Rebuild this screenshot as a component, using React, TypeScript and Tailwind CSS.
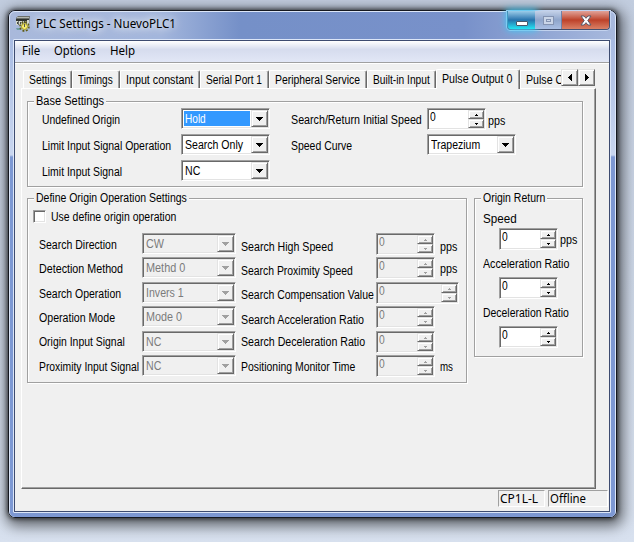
import React, { useLayoutEffect, useRef, useState } from "react";
import clsx from "clsx";

interface TextProps {
  w: number;
  children: string;
  className?: string;
}

// Text condensed or widened to the width of the old dialog font
const Text: React.FC<TextProps> = ({ w, children, className }) => {
  const ref = useRef<HTMLSpanElement>(null);
  const [scale, setScale] = useState(1);

  useLayoutEffect(() => {
    if (ref.current) setScale(w / ref.current.offsetWidth);
  }, [w, children]);

  return (
    <div
      className={clsx("h-[14px] shrink-0 leading-[14px] whitespace-nowrap", className)}
      style={{ width: w }}
    >
      <span
        ref={ref}
        className="inline-block origin-left"
        style={{ transform: `scaleX(${scale})` }}
      >
        {children}
      </span>
    </div>
  );
};

const SUNKEN =
  "border border-t-[#a0a0a0] border-l-[#a0a0a0] border-r-white border-b-white shadow-[inset_1px_1px_0_#696969,inset_-1px_-1px_0_#e3e3e3]";
const RAISED =
  "border border-t-[#e3e3e3] border-l-[#e3e3e3] border-r-[#696969] border-b-[#696969] bg-[#f0f0f0] shadow-[inset_1px_1px_0_#fff,inset_-1px_-1px_0_#a0a0a0]";

interface ComboProps {
  value: string;
  textWidth: number;
  width?: string;
  disabled?: boolean;
  selected?: boolean;
}

const Combo: React.FC<ComboProps> = ({
  value,
  textWidth,
  width = "w-[89px]",
  disabled,
  selected,
}) => (
  <div
    className={clsx(
      "flex h-[21px] shrink-0 p-px",
      SUNKEN,
      width,
      disabled ? "bg-[#f0f0f0] text-[#7b7b7b]" : "bg-white"
    )}
  >
    <div
      className={clsx(
        "m-px min-w-0 flex-1 pl-px pt-px",
        selected && "bg-[#3399ff] text-white"
      )}
    >
      <Text w={textWidth}>{value}</Text>
    </div>
    <div className={clsx("flex w-[17px] items-center justify-center", RAISED)}>
      <svg width="7" height="4" shapeRendering="crispEdges" fill={disabled ? "#a0a0a0" : "#000"}>
        <path d="M0 0h7v1H0zM1 1h5v1H1zM2 2h3v1H2zM3 3h1v1H3z" />
      </svg>
    </div>
  </div>
);

interface SpinProps {
  width?: string;
  disabled?: boolean;
}

const Spin: React.FC<SpinProps> = ({ width = "w-[59px]", disabled }) => {
  const fill = disabled ? "#a0a0a0" : "#000";
  return (
    <div
      className={clsx(
        "flex h-[22px] shrink-0 p-px",
        SUNKEN,
        width,
        disabled ? "bg-[#f0f0f0] text-[#7b7b7b]" : "bg-white"
      )}
    >
      <div className="flex-1 pl-px">
        <Text w={6}>0</Text>
      </div>
      <div className="flex w-[16px] flex-col">
        <div className={clsx("flex h-[9px] items-center justify-center", RAISED)}>
          <svg width="3" height="2" shapeRendering="crispEdges" fill={fill}>
            <path d="M1 0h1v1H1zM0 1h3v1H0z" />
          </svg>
        </div>
        <div className={clsx("flex h-[9px] items-center justify-center", RAISED)}>
          <svg width="3" height="2" shapeRendering="crispEdges" fill={fill}>
            <path d="M0 0h3v1H0zM1 1h1v1H1z" />
          </svg>
        </div>
      </div>
    </div>
  );
};

interface GroupProps {
  title: string;
  titleWidth: number;
  className: string;
  children: React.ReactNode;
}

const Group: React.FC<GroupProps> = ({ title, titleWidth, className, children }) => (
  <fieldset
    className={clsx(
      "shrink-0 border border-[#a0a0a0] shadow-[1px_1px_0_#fff,inset_1px_1px_0_#fff]",
      className
    )}
  >
    <legend className="ml-[6px] h-[14px] bg-[#f0f0f0] px-[2px]">
      <Text w={titleWidth}>{title}</Text>
    </legend>
    {children}
  </fieldset>
);

const TABS = [
  { label: "Settings", w: 37, box: "w-[49px]" },
  { label: "Timings", w: 35, box: "w-[48px]" },
  { label: "Input constant", w: 67, box: "w-[80px]" },
  { label: "Serial Port 1", w: 56, box: "w-[69px]" },
  { label: "Peripheral Service", w: 85, box: "w-[98px]" },
  { label: "Built-in Input", w: 57, box: "w-[69px]" },
  { label: "Pulse Output 0", w: 70, box: "w-[84px]", active: true },
  { label: "Pulse Output 1", w: 70, box: "w-[41px]", cut: true },
];

const ORIGIN_ROWS = [
  { label: "Search Direction", w: 78, value: "CW", vw: 18, pad: "pt-[5px]", box: "h-[24px]" },
  { label: "Detection Method", w: 84, value: "Methd 0", vw: 39, pad: "pt-[5px]", box: "h-[25px]" },
  { label: "Search Operation", w: 82, value: "Invers 1", vw: 38, pad: "pt-[5px]", box: "h-[24px]" },
  { label: "Operation Mode", w: 76, value: "Mode 0", vw: 36, pad: "pt-[5px]", box: "h-[25px]" },
  { label: "Origin Input Signal", w: 86, value: "NC", vw: 15, pad: "pt-[4px]", box: "h-[24px]" },
  { label: "Proximity Input Signal", w: 100, value: "NC", vw: 15, pad: "pt-[5px]", box: "h-[24px]" },
];

const SEARCH_ROWS = [
  { label: "Search High Speed", w: 92, pad: "pt-[7px]", box: "h-[24px]", unit: "pps", uw: 17, upad: "pt-[7px]" },
  { label: "Search Proximity Speed", w: 112, pad: "pt-[7px]", box: "h-[25px]", unit: "pps", uw: 17, upad: "pt-[5px]" },
  { label: "Search Compensation Value", w: 133, pad: "pt-[6px]", box: "h-[24px]", wide: true },
  { label: "Search Acceleration Ratio", w: 123, pad: "pt-[7px]", box: "h-[25px]" },
  { label: "Search Deceleration Ratio", w: 124, pad: "pt-[4px]", box: "h-[24px]" },
  { label: "Positioning Monitor Time", w: 114, pad: "pt-[5px]", box: "h-[24px]", unit: "ms", uw: 13, upad: "pt-[5px]" },
];

const AppIcon = () => (
  <svg width="16" height="16" viewBox="0 0 16 16">
    <path d="M1 2l2-2h12l-1 9H1z" fill="#6b6f6b" />
    <path d="M1 3h13v2H1z" fill="#2e322e" />
    <path d="M2 1h12v1H2z" fill="#b4b8b0" />
    <path d="M1 5h2v4H1zM4 5h3v4H4zM8 5h3v3H8zM12 4h2v5h-2z" fill="#d4d8cc" />
    <path d="M2 6h1v2H2zM5 6h1v2H5zM9 5h1v2H9z" fill="#454a45" />
    <path d="M1 12h4v2H2z" fill="#6d9da0" />
    <circle cx="9.500" cy="10.500" r="4.500" fill="none" stroke="#5e5a10" strokeWidth="1.500" strokeDasharray="2 1.500" />
    <circle cx="9.500" cy="10.500" r="3" fill="#f4ec70" stroke="#a39a1c" />
    <path d="M9 8h1v3H9z" fill="#555" />
  </svg>
);

const TitleBar = () => (
  <div className="flex h-[27px] justify-between">
    <div className="flex pl-[5px] pt-[4px]">
      <AppIcon />
      <Text w={140} className="ml-[5px] mt-px font-['Noto_Sans','Open_Sans',sans-serif] text-[12px] [text-shadow:0_0_8px_#fff,0_0_12px_#fff]">
        PLC Settings - NuevoPLC1
      </Text>
    </div>
    <div className="-mt-px mr-[5px] flex h-[19px] w-[103px] rounded-b-[4px] border border-t-0 border-[#42506f] shadow-[0_0_0_1px_#c3d2ee]">
      <div className="flex w-[27px] justify-center rounded-bl-[3px] bg-linear-to-b from-[#9acde9] from-0% via-[#2674ad] via-50% to-[#22e5f3] shadow-[0_0_7px_2px_#43c7f5]">
        <div className="mt-[10px] h-[5px] w-[12px] rounded-[1px] border border-[#48586a] bg-white" />
      </div>
      <div className="flex w-[27px] justify-center border-r border-[#7182a8] bg-linear-to-b from-[#c4d1e8] via-[#8fa5cb] to-[#aabfe4]">
        <div className="mt-[5px] flex h-[9px] w-[11px] items-center justify-center border border-[#8493b2] bg-[#cad5e8]">
          <div className="h-[3px] w-[5px] border border-[#8493b2]" />
        </div>
      </div>
      <div className="flex flex-1 justify-center rounded-br-[3px] bg-linear-to-b from-[#e0a299] from-0% via-[#bd4129] via-50% to-[#d98066]">
        <svg className="mt-[4px]" width="12" height="11" viewBox="0 0 12 11">
          <path d="M1 1h3l2 2.300L8 1h3L7.800 5.500 11 10H8L6 7.700 4 10H1l3.200-4.500z" fill="#fff" stroke="#595a6a" />
        </svg>
      </div>
    </div>
  </div>
);

const MenuBar = () => (
  <div className="flex h-[22px] shrink-0 border-b border-[#a0a0a0] bg-linear-to-b from-white from-0% via-[#d6dcee] via-40% to-[#e2e7f6] pl-[7px] pt-[3px] font-['Noto_Sans','Open_Sans',sans-serif]">
    <Text w={18}>File</Text>
    <Text w={42} className="ml-[14px]">Options</Text>
    <Text w={25} className="ml-[14px]">Help</Text>
  </div>
);

const TabStrip = () => (
  <div className="flex h-[19px] items-end pl-[2px]">
    {TABS.map((tab) => (
      <div
        key={tab.label}
        className={clsx(
          "shrink-0 overflow-hidden border-t border-l border-white pl-[5px]",
          tab.box,
          tab.active ? "h-[20px] -mb-px bg-[#f0f0f0] pt-[2px]" : "h-[18px] pt-[2px]",
          !tab.cut && "rounded-t-[2px] border-r border-r-[#696969] shadow-[inset_-1px_0_0_#a0a0a0]"
        )}
      >
        <Text w={tab.w}>{tab.label}</Text>
      </div>
    ))}
    <div className="mb-[2px] flex">
      <div className={clsx("flex h-[17px] w-[17px] items-center justify-center", RAISED)}>
        <svg width="4" height="7" shapeRendering="crispEdges">
          <path d="M3 0h1v7H3zM2 1h1v5H2zM1 2h1v3H1zM0 3h1v1H0z" />
        </svg>
      </div>
      <div className={clsx("flex h-[17px] w-[17px] items-center justify-center", RAISED)}>
        <svg width="4" height="7" shapeRendering="crispEdges">
          <path d="M0 0h1v7H0zM1 1h1v5H1zM2 2h1v3H2zM3 3h1v1H3z" />
        </svg>
      </div>
    </div>
  </div>
);

const BaseSettings = () => (
  <Group title="Base Settings" titleWidth={68} className="-mt-px h-[93px] w-[556px]">
    <div className="flex pl-[14px]">
      <div className="flex w-[139px] flex-col gap-[12px] pt-[5px]">
        <Text w={78}>Undefined Origin</Text>
        <Text w={129}>Limit Input Signal Operation</Text>
        <Text w={80}>Limit Input Signal</Text>
      </div>
      <div className="flex w-[110px] flex-col gap-[5px]">
        <Combo value="Hold" textWidth={21} selected />
        <Combo value="Search Only" textWidth={58} />
        <Combo value="NC" textWidth={15} />
      </div>
      <div className="flex w-[136px] flex-col gap-[12px] pt-[5px]">
        <Text w={131}>Search/Return Initial Speed</Text>
        <Text w={61}>Speed Curve</Text>
      </div>
      <div className="flex flex-col gap-[4px]">
        <div className="flex">
          <Spin />
          <Text w={17} className="ml-[2px] mt-[6px]">pps</Text>
        </div>
        <Combo value="Trapezium" textWidth={49} />
      </div>
    </div>
  </Group>
);

const DefineOrigin = () => (
  <Group title="Define Origin Operation Settings" titleWidth={151} className="h-[192px] w-[440px]">
    <div className="flex h-[28px] pl-[5px] pt-[5px]">
      <div className={clsx("h-[13px] w-[13px] bg-white", SUNKEN)} />
      <Text w={125} className="ml-[5px]">Use define origin operation</Text>
    </div>
    <div className="flex pl-[11px]">
      <div className="w-[202px]">
        {ORIGIN_ROWS.map((row) => (
          <div key={row.label} className={clsx("flex", row.box)}>
            <div className={clsx("w-[103px] shrink-0", row.pad)}>
              <Text w={row.w}>{row.label}</Text>
            </div>
            <Combo value={row.value} textWidth={row.vw} width="w-[94px]" disabled />
          </div>
        ))}
      </div>
      <div>
        {SEARCH_ROWS.map((row) => (
          <div key={row.label} className={clsx("flex", row.box)}>
            <div className={clsx("w-[135px] shrink-0", row.pad)}>
              <Text w={row.w}>{row.label}</Text>
            </div>
            <Spin width={row.wide ? "w-[83px]" : "w-[59px]"} disabled />
            {row.unit && (
              <div className={clsx("ml-[5px]", row.upad)}>
                <Text w={row.uw}>{row.unit}</Text>
              </div>
            )}
          </div>
        ))}
      </div>
    </div>
  </Group>
);

const OriginReturn = () => (
  <Group title="Origin Return" titleWidth={62} className="h-[166px] w-[109px]">
    <div className="pl-[8px] pt-[7px]">
      <Text w={34}>Speed</Text>
      <div className="ml-[16px] mt-[2px] flex">
        <Spin />
        <Text w={17} className="ml-[2px] mt-[5px]">pps</Text>
      </div>
      <Text w={86} className="mt-[7px]">Acceleration Ratio</Text>
      <div className="ml-[16px] mt-[6px]">
        <Spin />
      </div>
      <Text w={86} className="mt-[7px]">Deceleration Ratio</Text>
      <div className="ml-[16px] mt-[6px]">
        <Spin />
      </div>
    </div>
  </Group>
);

const StatusBar = () => (
  <div className="flex h-[17px] justify-end gap-[3px] pr-px font-['Noto_Sans','Open_Sans',sans-serif]">
    <div className="w-[47px] border border-t-[#a0a0a0] border-l-[#a0a0a0] border-r-white border-b-white pl-px pt-px">
      <Text w={38}>CP1L-L</Text>
    </div>
    <div className="w-[60px] border border-t-[#a0a0a0] border-l-[#a0a0a0] border-r-white border-b-white pl-px pt-px">
      <Text w={36}>Offline</Text>
    </div>
  </div>
);

export default function App() {
  return (
    <div className="h-[542px] w-[634px] overflow-hidden bg-linear-to-b from-[#c2cddf] to-[#d8e1ef] pl-[8px] pt-[10px] font-['Liberation_Sans',Arial,sans-serif] text-[12px] text-black">
      <div className="h-[508px] w-[609px] rounded-[7px] border border-[#15181f] bg-linear-to-b from-[#7d98cf] to-[#7d98d3] shadow-[0_0_4px_1px_rgba(0,0,0,0.6),2px_4px_14px_4px_rgba(0,0,0,0.55)]">
        <div className="h-full rounded-[6px] border border-[#dce6f8] bg-[linear-gradient(to_right,#a9b9db_0,#a3b6dc_25%,#7590c8_38%,#7891ca_75%,#a8b9dd_100%)] bg-[length:100%_28px] bg-no-repeat">
          <TitleBar />
          <div className="flex bg-[linear-gradient(to_bottom,#a8bbe2_0,#c9d6ef_116px,#7d98d3_118px,#7d98d3_100%)] pl-[3px] pb-[4px] rounded-b-[5px]">
            <div className="rounded-[1px] border border-[#dce6f8]">
              <div className="flex h-[472px] w-[596px] flex-col border border-[#3d4b70] bg-[#f0f0f0]">
                <MenuBar />
                <div className="h-[427px] border-t border-white pl-[6px] pt-[5px]">
                  <TabStrip />
                  <div className="h-[401px] w-[575px] border border-t-white border-l-white border-r-[#696969] border-b-[#696969] pl-[5px] pt-[6px] shadow-[inset_-1px_-1px_0_#a0a0a0]">
                    <BaseSettings />
                    <div className="mt-[4px] flex gap-[7px]">
                      <DefineOrigin />
                      <OriginReturn />
                    </div>
                  </div>
                </div>
                <StatusBar />
              </div>
            </div>
          </div>
        </div>
      </div>
    </div>
  );
}
